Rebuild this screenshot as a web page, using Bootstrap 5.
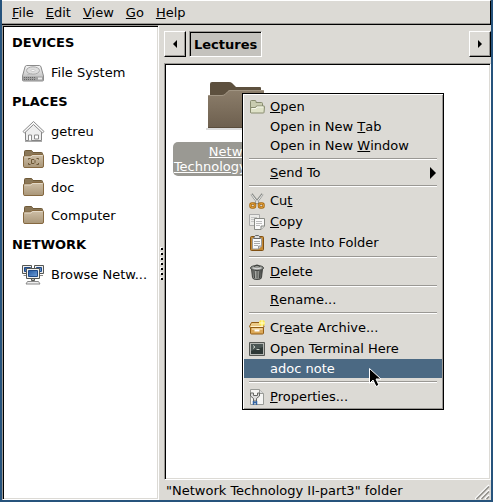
<!DOCTYPE html>
<html lang="en">
<head>
<meta charset="utf-8">
<meta name="viewport" content="width=device-width, initial-scale=1">
<title>Lectures</title>
<link href="https://cdn.jsdelivr.net/npm/bootstrap@5.3.0/dist/css/bootstrap.min.css" rel="stylesheet">
<style>
:root { --face: #dcdad5; --shade: #9a9894; --sel: #4b6983; }
body { background: #26537c; font: 13px/19px "DejaVu Sans", sans-serif; color: #000; }
button { font: inherit; color: inherit; }
svg { display: block; flex: none; }
.window { padding: 0 2px 2px; }
.window-face { background: var(--face); }
.menubar { height: 25px; padding: 0 4px; border-top: 1px solid #fff; border-right: 1px solid #000; border-bottom: 1px solid #000; box-shadow: inset 0 -1px var(--shade); }
.menubar button { border: 0; background: none; padding: 0 6px; }
.places { flex: 0 0 157px; background: #fff; border: 1px solid; border-color: var(--shade) #fff #fff var(--shade); box-shadow: inset 1px 1px #000, inset -1px -1px var(--face); padding: 1px 2px 0 9px; }
.places h2 { font-size: 13px; line-height: 30px; font-weight: bold; margin: 0; padding-top: 1px; }
.places a { height: 28px; gap: 6px; padding-left: 9px; color: #000; }
.places svg { width: 24px; height: 24px; }
.grip { flex: 0 0 5px; }
.grip svg { margin-top: 222px; }
.pathbar { height: 38px; padding: 6px 0; gap: 3px; }
.bevel { background: var(--face); border: 1px solid; border-color: #fff #000 #000 #fff; box-shadow: inset -1px -1px var(--shade); width: 22px; padding: 0; }
.crumb { background: #c4c2bd; border: 1px solid; border-color: var(--shade) #fff #fff var(--shade); box-shadow: inset 1px 1px #000; padding: 0 4px; font-weight: bold; }
.files { background: #fff; border: 1px solid; border-color: var(--shade) #fff #fff var(--shade); box-shadow: inset 1px 1px #000, inset -1px -1px var(--face); padding: 17px 8px; }
.file { width: 126px; }
.file-label { background: #9a9993; color: #fff; border-radius: 5px; padding: 2px 0; line-height: 15px; text-decoration: underline; margin-top: 11px; white-space: nowrap; }
.statusline { height: 20px; padding-left: 2px; }
.popup { left: 242px; top: 93px; width: 202px; background: var(--face); border: 1px solid #000; padding: 2px 1px; box-shadow: inset 1px 1px #fff, inset -1px -1px var(--shade); }
.popup button { display: flex; align-items: center; width: 100%; height: 19px; border: 0; background: none; padding: 0 6px 0 26px; text-align: left; white-space: nowrap; }
.popup button.pic { height: 21px; padding-left: 5px; gap: 5px; }
.popup button.chosen { background: var(--sel); color: #fff; }
.popup hr { margin: 3px 5px; border: 0; height: 2px; opacity: 1; background: linear-gradient(var(--shade) 50%, #fff 50%); }
.pointer { left: 368px; top: 367px; }
</style>
<script src="https://cdn.jsdelivr.net/npm/bootstrap@5.3.0/dist/js/bootstrap.bundle.min.js"></script>
</head>
<body>
<svg width="0" height="0" class="position-absolute" aria-hidden="true">
  <defs>
    <linearGradient id="tan" x2="0" y2="1"><stop stop-color="#cfc0a8"/><stop offset="1" stop-color="#a99678"/></linearGradient>
    <linearGradient id="silver" x2="0" y2="1"><stop stop-color="#f4f4f4"/><stop offset="1" stop-color="#b4b4b4"/></linearGradient>
    <linearGradient id="brown" x2="0" y2="1"><stop stop-color="#8c7e6b"/><stop offset="1" stop-color="#6d5f4e"/></linearGradient>
    <linearGradient id="screen" x2="1" y2="1"><stop stop-color="#2257a0"/><stop offset="1" stop-color="#6f9fd8"/></linearGradient>
    <linearGradient id="can" x2="1" y2="0"><stop stop-color="#60625f"/><stop offset=".45" stop-color="#b5b7b2"/><stop offset="1" stop-color="#3d3f3c"/></linearGradient>
    <symbol id="folder" viewBox="0 0 24 24">
      <path d="M3.500 19.500V4.500q0-1 1-1H10q1 0 1.500 1l.5 1h8.500q1 0 1 1V19.500z" fill="#8a7758" stroke="#6f5a38"/>
      <path d="M2.500 19.500V10q0-1 1-1H9.500l1.500-1.500h10.500q1 0 1 1V19q0 1.500-1.500 1.500H4q-1.500 0-1.500-1z" fill="url(#tan)" stroke="#856840"/>
      <path d="M3.500 10h6.500l1.500-1.500h10" fill="none" stroke="#e2d8c6"/>
    </symbol>
  </defs>
</svg>
<div class="window vh-100">
<div class="window-face d-flex flex-column h-100">
  <nav class="menubar d-flex align-items-center" aria-label="Menu bar">
    <button type="button"><u>F</u>ile</button><button type="button"><u>E</u>dit</button><button type="button"><u>V</u>iew</button><button type="button"><u>G</u>o</button><button type="button"><u>H</u>elp</button>
  </nav>
  <div class="d-flex flex-grow-1">
    <aside class="places text-nowrap overflow-hidden">
      <h2>DEVICES</h2>
      <a href="#" class="d-flex align-items-center text-decoration-none">
        <svg viewBox="0 0 24 24"><path d="M5.500 5.500h13q1 0 1.500 1.500l2.500 9v4q0 1-1 1h-19q-1 0-1-1v-4L4 7q.5-1.500 1.500-1.500z" fill="url(#silver)" stroke="#8b8b8b"/><path d="M2 16.500h20v3.500H2z" fill="#a0a0a0"/><path d="M3 17.500h11M3 19.500h11" stroke="#666" stroke-dasharray="1 1"/><path d="M17 18.500h4" stroke="#e8e8e8" stroke-width="2"/><ellipse cx="12" cy="10.500" rx="6.500" ry="3.700" fill="#ddd" stroke="#aaa"/><ellipse cx="12" cy="10.500" rx="2" ry="1" fill="#fff" stroke="#bbb" stroke-width=".7"/><path d="M6 15l5-1.500" stroke="#bbb"/></svg>
        <span>File System</span></a>
      <h2>PLACES</h2>
      <a href="#" class="d-flex align-items-center text-decoration-none">
        <svg viewBox="0 0 24 24"><path d="M4.500 11.500V21.500h16V11.500L12.500 5z" fill="#eee" stroke="#858585"/><path d="M2 12.500L12.500 2.500 23 12.500l-1.500 1.500-9-8.500-9 8.500z" fill="#fafafa" stroke="#8a8a8a" stroke-linejoin="round"/><path d="M7.500 21.500v-5.500h3v5.500M13.500 20v-4h4v4z" fill="#fff" stroke="#8a8a8a"/><path d="M4 22.500h17" stroke="#aaa"/></svg>
        <span>getreu</span></a>
      <a href="#" class="d-flex align-items-center text-decoration-none">
        <svg viewBox="0 0 24 24"><use href="#folder"/><path d="M7.500 12.500v-1h2M15.500 11.500h2v1M7.500 16v1.500h2M15.500 17.500h2V16M10.500 12.500h2.500l1 1v2l-1 1h-2.500z" fill="none" stroke="#6d5735"/></svg>
        <span>Desktop</span></a>
      <a href="#" class="d-flex align-items-center text-decoration-none"><svg><use href="#folder"/></svg><span>doc</span></a>
      <a href="#" class="d-flex align-items-center text-decoration-none"><svg><use href="#folder"/></svg><span>Computer</span></a>
      <h2>NETWORK</h2>
      <a href="#" class="d-flex align-items-center text-decoration-none">
        <svg viewBox="0 0 24 24"><g stroke="#555753"><path d="M1.500 3.500h9v8h-9zM13.500 3.500h9v8h-9z" fill="#eee"/><path d="M3.500 5.500h6v4h-6zM15.500 5.500h5v4h-5z" fill="url(#screen)" stroke="#204a87"/><path d="M2.500 13.500h4M18 13.500h4" stroke="#888"/><path d="M5.500 6.500h13v10h-13z" fill="#f2f2f0"/><path d="M7.500 8.500h9v6h-9z" fill="url(#screen)" stroke="#204a87"/><path d="M10.500 16.500h3v2h-3z" fill="#bbb"/><path d="M6.500 19.500h11l1.500 2.500H5z" fill="#eee" stroke="#888"/></g></svg>
        <span>Browse Netw...</span></a>
    </aside>
    <div class="grip" aria-hidden="true"><svg width="5" height="34" viewBox="0 0 5 34"><path d="M2 0v34" stroke="#fff" stroke-width="2" stroke-dasharray="2 3"/><path d="M3 1v33" stroke="#000" stroke-width="2" stroke-dasharray="2 3"/></svg></div>
    <main class="d-flex flex-column flex-grow-1">
      <div class="pathbar d-flex">
        <button type="button" class="bevel d-flex align-items-center justify-content-center" aria-label="Back"><svg width="4" height="8"><path d="M4 0v8L0 4z"/></svg></button>
        <button type="button" class="crumb">Lectures</button>
        <button type="button" class="bevel d-flex align-items-center justify-content-center ms-auto" aria-label="Forward"><svg width="4" height="8"><path d="M0 0v8l4-4z"/></svg></button>
      </div>
      <section class="files flex-grow-1">
        <div class="file text-center">
          <svg class="mx-auto" width="60" height="50" viewBox="0 0 60 50"><path d="M0 48h60" stroke="#ddd" stroke-width="2"/><path d="M4 46V3q0-2 2-2h17q2 0 3 1l4 4h24q1 0 1 1v39z" fill="#5d503e"/><path d="M2 47V15q0-1 1-1h13q2 0 3-1l3-3q1-1 2-1h33q1 0 1 1v36q0 1-1 1z" fill="url(#brown)"/><path d="M3 14.500h13q2 0 3-1l3-3q1-1 2-1h33" fill="none" stroke="#a09482"/><path d="M2 46.500h55" stroke="#5a4d3c"/></svg>
          <div class="file-label">Network<br>Technology II-part3</div>
        </div>
      </section>
      <footer class="statusline d-flex align-items-center justify-content-between">
        <span>"Network Technology II-part3" folder</span>
        <svg class="align-self-end" width="16" height="16" viewBox="0 0 16 16"><g stroke-width="1.500"><path d="M0 15L14 1M5 15l9-9M10 15l4-4" stroke="#fff"/><path d="M1.500 15L14 2.500M6.500 15L14 7.500M11.500 15l2.500-2.500" stroke="#8f8d88"/></g></svg>
      </footer>
    </main>
  </div>
</div>
</div>

<div class="popup position-absolute" role="menu">
  <button type="button" role="menuitem" class="pic"><svg width="16" height="16"><path d="M1.500 14V2.500q0-1 1-1H6q1 0 1 1v1h5.500q1 0 1 1V8" fill="#c9ccb0" stroke="#888c70"/><path d="M1.500 13.500V8.500h5l1-1.500h7.500q.5 0 .5.500L15 13.500q0 .5-1 .5H2z" fill="#dfe2c8" stroke="#888c70"/><path d="M3 9.500h4l1-1.500h6" fill="none" stroke="#f7f8ec"/></svg><span><u>O</u>pen</span></button>
  <button type="button" role="menuitem">Open in New&nbsp;<u>T</u>ab</button>
  <button type="button" role="menuitem">Open in New&nbsp;<u>W</u>indow</button>
  <hr>
  <button type="button" role="menuitem"><u>S</u>end To<svg class="ms-auto" width="6" height="12"><path d="M0 0v12l6-6z"/></svg></button>
  <hr>
  <button type="button" role="menuitem" class="pic"><svg width="16" height="16"><path d="M2.500 1L10 11M13.500 1L6 11" stroke="#8c8e8a" stroke-width="2.500"/><path d="M2.500 1.500L9 10M13.500 1.500L7 10" stroke="#eee"/><g fill="none" stroke="#a56a16" stroke-width="2.500"><rect x="1.500" y="10.500" width="4.500" height="4" rx="1.500"/><rect x="10" y="10.500" width="4.500" height="4" rx="1.500"/></g><g fill="none" stroke="#e09a30"><rect x="1.500" y="10.500" width="4.500" height="4" rx="1.500"/><rect x="10" y="10.500" width="4.500" height="4" rx="1.500"/></g></svg><span>Cu<u>t</u></span></button>
  <button type="button" role="menuitem" class="pic"><svg width="16" height="16"><path d="M.5.500h10v11H.5z" fill="#ebebe8" stroke="#aaa"/><path d="M2 3.500h6M2 5.500h3M2 7.500h3" stroke="#c4c4c4"/><path d="M5.500 4.500h10V12l-3.500 3.500H5.500z" fill="#fafafa" stroke="#888a85"/><path d="M15.500 12H12v3.500" fill="#ddd" stroke="#888a85"/><path d="M7 7.500h6M7 9.500h6M7 11.500h4" stroke="#bbb"/></svg><span><u>C</u>opy</span></button>
  <button type="button" role="menuitem" class="pic"><svg width="16" height="16"><rect x="1.500" y="1.500" width="13" height="14" rx="1" fill="#c58a35" stroke="#805012"/><path d="M3.500 3.500h9V11L9.500 14h-6z" fill="#fafafa" stroke="#999"/><path d="M12.500 11H9.500v3" fill="#ccc" stroke="#999"/><path d="M5 6.500h6M5 8.500h6M5 10.500h4" stroke="#aaa"/><path d="M5 3.500V2l1.500-1.500h3L11 2v1.500z" fill="#ddd" stroke="#666"/></svg><span>Paste Into Folder</span></button>
  <hr>
  <button type="button" role="menuitem" class="pic"><svg width="16" height="16"><path d="M2.500 4.500l1 9q0 2 4.500 2t4.500-2l1-9z" fill="url(#can)" stroke="#40423f"/><path d="M5 7l.5 7M8 7v7.500M11 7l-.5 7" stroke="#40423f"/><ellipse cx="8" cy="4" rx="6.500" ry="2.500" fill="#9a9c98" stroke="#40423f"/><path d="M5.500 3q0-2 2.500-2t2.500 2" fill="none" stroke="#40423f"/><path d="M4 4q4 1.500 8 0" fill="none" stroke="#ddd"/></svg><span><u>D</u>elete</span></button>
  <hr>
  <button type="button" role="menuitem"><u>R</u>ename...</button>
  <hr>
  <button type="button" role="menuitem" class="pic"><svg width="16" height="16"><path d="M1.500 7.500h13v5.500q0 1-1 1h-11q-1 0-1-1z" fill="#dca959" stroke="#935d14"/><path d="M2.500 2.500h11l1.500 4q0 1-1 1h-12.500q-1 0-1-1z" fill="#ecca88" stroke="#935d14"/><path d="M2 6.500h12M3 9h10.500" stroke="#fff2cf"/><path d="M5.500 10.500h5" stroke="#fff" stroke-width="2"/><circle cx="13" cy="3" r="3" fill="#fce94f"/><path d="M13 0v6M10 3h6" stroke="#fffbd0"/></svg><span>Cr<u>e</u>ate Archive...</span></button>
  <button type="button" role="menuitem" class="pic"><svg width="16" height="16"><path d="M.5 1.500h15v13H.5z" fill="#b5b7b3" stroke="#555753"/><path d="M2 3h12v10H2z" fill="#2e3836"/><path d="M2 3h12v3L2 10z" fill="#4b5654"/><path d="M4 4.500l2 1.500-2 1.500M7.500 8.500h3" fill="none" stroke="#c8d0c8"/></svg><span>Open Terminal Here</span></button>
  <button type="button" role="menuitem" class="chosen">adoc note</button>
  <hr>
  <button type="button" role="menuitem" class="pic"><svg width="16" height="16"><path d="M1.500.500h9l4 4v11h-13z" fill="#f5f5f3" stroke="#999b97"/><path d="M10.500.500v4h4" fill="#ddd" stroke="#999b97"/><path d="M1.500 4v3l3 2.500V12h3V9.500l3-2.500V4H8.500v2.500h-4V4z" fill="#ddd" stroke="#666864"/><path d="M4.500 12v4M7.500 12v4M4 13.500h4" stroke="#3465a4" stroke-width="1.500"/></svg><span><u>P</u>roperties...</span></button>
</div>
<svg class="pointer position-absolute" width="16" height="22" viewBox="0 0 16 22" aria-hidden="true"><path d="M1.500 1.500v15l3.500-3.500 3 6.500 3-1.300-3-6.200h5z" fill="#000" stroke="#fff"/></svg>
</body>
</html>
